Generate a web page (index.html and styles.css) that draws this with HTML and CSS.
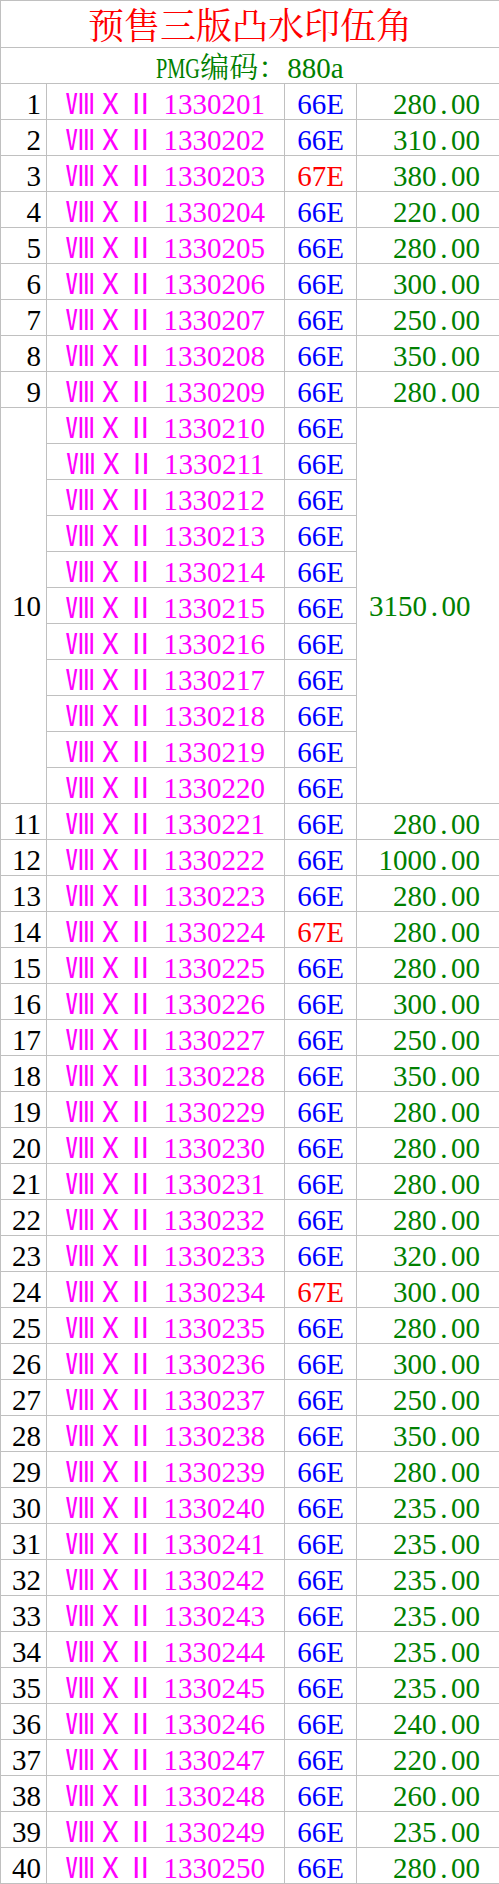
FILE: index.html
```html
<!DOCTYPE html>
<html lang="zh">
<head>
<meta charset="utf-8">
<title>预售三版凸水印伍角</title>
<link rel="stylesheet" href="styles.css">
</head>
<body>
<table class="sheet">
<colgroup><col class="c1"><col class="c2"><col class="c3"><col class="c4"></colgroup>
<tbody>
<tr class="title-row"><td colspan="4" class="title">预售三版凸水印伍角</td></tr>
<tr><td colspan="4" class="pmg"><span class="narrow">PMG</span><span class="cjk">编码：</span>880a</td></tr>
<tr><td class="no">1</td><td class="sn"><span class="rm">ⅧⅩⅡ</span> 1330201</td><td class="gr">66E</td><td class="pr">280<span class="dot">.</span>00</td></tr>
<tr><td class="no">2</td><td class="sn"><span class="rm">ⅧⅩⅡ</span> 1330202</td><td class="gr">66E</td><td class="pr">310<span class="dot">.</span>00</td></tr>
<tr><td class="no">3</td><td class="sn"><span class="rm">ⅧⅩⅡ</span> 1330203</td><td class="gr alt">67E</td><td class="pr">380<span class="dot">.</span>00</td></tr>
<tr><td class="no">4</td><td class="sn"><span class="rm">ⅧⅩⅡ</span> 1330204</td><td class="gr">66E</td><td class="pr">220<span class="dot">.</span>00</td></tr>
<tr><td class="no">5</td><td class="sn"><span class="rm">ⅧⅩⅡ</span> 1330205</td><td class="gr">66E</td><td class="pr">280<span class="dot">.</span>00</td></tr>
<tr><td class="no">6</td><td class="sn"><span class="rm">ⅧⅩⅡ</span> 1330206</td><td class="gr">66E</td><td class="pr">300<span class="dot">.</span>00</td></tr>
<tr><td class="no">7</td><td class="sn"><span class="rm">ⅧⅩⅡ</span> 1330207</td><td class="gr">66E</td><td class="pr">250<span class="dot">.</span>00</td></tr>
<tr><td class="no">8</td><td class="sn"><span class="rm">ⅧⅩⅡ</span> 1330208</td><td class="gr">66E</td><td class="pr">350<span class="dot">.</span>00</td></tr>
<tr><td class="no">9</td><td class="sn"><span class="rm">ⅧⅩⅡ</span> 1330209</td><td class="gr">66E</td><td class="pr">280<span class="dot">.</span>00</td></tr>
<tr><td class="no mid" rowspan="11">10</td><td class="sn"><span class="rm">ⅧⅩⅡ</span> 1330210</td><td class="gr">66E</td><td class="pr lot" rowspan="11">3150<span class="dot">.</span>00</td></tr>
<tr><td class="sn"><span class="rm">ⅧⅩⅡ</span> 1330211</td><td class="gr">66E</td></tr>
<tr><td class="sn"><span class="rm">ⅧⅩⅡ</span> 1330212</td><td class="gr">66E</td></tr>
<tr><td class="sn"><span class="rm">ⅧⅩⅡ</span> 1330213</td><td class="gr">66E</td></tr>
<tr><td class="sn"><span class="rm">ⅧⅩⅡ</span> 1330214</td><td class="gr">66E</td></tr>
<tr><td class="sn"><span class="rm">ⅧⅩⅡ</span> 1330215</td><td class="gr">66E</td></tr>
<tr><td class="sn"><span class="rm">ⅧⅩⅡ</span> 1330216</td><td class="gr">66E</td></tr>
<tr><td class="sn"><span class="rm">ⅧⅩⅡ</span> 1330217</td><td class="gr">66E</td></tr>
<tr><td class="sn"><span class="rm">ⅧⅩⅡ</span> 1330218</td><td class="gr">66E</td></tr>
<tr><td class="sn"><span class="rm">ⅧⅩⅡ</span> 1330219</td><td class="gr">66E</td></tr>
<tr><td class="sn"><span class="rm">ⅧⅩⅡ</span> 1330220</td><td class="gr">66E</td></tr>
<tr><td class="no">11</td><td class="sn"><span class="rm">ⅧⅩⅡ</span> 1330221</td><td class="gr">66E</td><td class="pr">280<span class="dot">.</span>00</td></tr>
<tr><td class="no">12</td><td class="sn"><span class="rm">ⅧⅩⅡ</span> 1330222</td><td class="gr">66E</td><td class="pr">1000<span class="dot">.</span>00</td></tr>
<tr><td class="no">13</td><td class="sn"><span class="rm">ⅧⅩⅡ</span> 1330223</td><td class="gr">66E</td><td class="pr">280<span class="dot">.</span>00</td></tr>
<tr><td class="no">14</td><td class="sn"><span class="rm">ⅧⅩⅡ</span> 1330224</td><td class="gr alt">67E</td><td class="pr">280<span class="dot">.</span>00</td></tr>
<tr><td class="no">15</td><td class="sn"><span class="rm">ⅧⅩⅡ</span> 1330225</td><td class="gr">66E</td><td class="pr">280<span class="dot">.</span>00</td></tr>
<tr><td class="no">16</td><td class="sn"><span class="rm">ⅧⅩⅡ</span> 1330226</td><td class="gr">66E</td><td class="pr">300<span class="dot">.</span>00</td></tr>
<tr><td class="no">17</td><td class="sn"><span class="rm">ⅧⅩⅡ</span> 1330227</td><td class="gr">66E</td><td class="pr">250<span class="dot">.</span>00</td></tr>
<tr><td class="no">18</td><td class="sn"><span class="rm">ⅧⅩⅡ</span> 1330228</td><td class="gr">66E</td><td class="pr">350<span class="dot">.</span>00</td></tr>
<tr><td class="no">19</td><td class="sn"><span class="rm">ⅧⅩⅡ</span> 1330229</td><td class="gr">66E</td><td class="pr">280<span class="dot">.</span>00</td></tr>
<tr><td class="no">20</td><td class="sn"><span class="rm">ⅧⅩⅡ</span> 1330230</td><td class="gr">66E</td><td class="pr">280<span class="dot">.</span>00</td></tr>
<tr><td class="no">21</td><td class="sn"><span class="rm">ⅧⅩⅡ</span> 1330231</td><td class="gr">66E</td><td class="pr">280<span class="dot">.</span>00</td></tr>
<tr><td class="no">22</td><td class="sn"><span class="rm">ⅧⅩⅡ</span> 1330232</td><td class="gr">66E</td><td class="pr">280<span class="dot">.</span>00</td></tr>
<tr><td class="no">23</td><td class="sn"><span class="rm">ⅧⅩⅡ</span> 1330233</td><td class="gr">66E</td><td class="pr">320<span class="dot">.</span>00</td></tr>
<tr><td class="no">24</td><td class="sn"><span class="rm">ⅧⅩⅡ</span> 1330234</td><td class="gr alt">67E</td><td class="pr">300<span class="dot">.</span>00</td></tr>
<tr><td class="no">25</td><td class="sn"><span class="rm">ⅧⅩⅡ</span> 1330235</td><td class="gr">66E</td><td class="pr">280<span class="dot">.</span>00</td></tr>
<tr><td class="no">26</td><td class="sn"><span class="rm">ⅧⅩⅡ</span> 1330236</td><td class="gr">66E</td><td class="pr">300<span class="dot">.</span>00</td></tr>
<tr><td class="no">27</td><td class="sn"><span class="rm">ⅧⅩⅡ</span> 1330237</td><td class="gr">66E</td><td class="pr">250<span class="dot">.</span>00</td></tr>
<tr><td class="no">28</td><td class="sn"><span class="rm">ⅧⅩⅡ</span> 1330238</td><td class="gr">66E</td><td class="pr">350<span class="dot">.</span>00</td></tr>
<tr><td class="no">29</td><td class="sn"><span class="rm">ⅧⅩⅡ</span> 1330239</td><td class="gr">66E</td><td class="pr">280<span class="dot">.</span>00</td></tr>
<tr><td class="no">30</td><td class="sn"><span class="rm">ⅧⅩⅡ</span> 1330240</td><td class="gr">66E</td><td class="pr">235<span class="dot">.</span>00</td></tr>
<tr><td class="no">31</td><td class="sn"><span class="rm">ⅧⅩⅡ</span> 1330241</td><td class="gr">66E</td><td class="pr">235<span class="dot">.</span>00</td></tr>
<tr><td class="no">32</td><td class="sn"><span class="rm">ⅧⅩⅡ</span> 1330242</td><td class="gr">66E</td><td class="pr">235<span class="dot">.</span>00</td></tr>
<tr><td class="no">33</td><td class="sn"><span class="rm">ⅧⅩⅡ</span> 1330243</td><td class="gr">66E</td><td class="pr">235<span class="dot">.</span>00</td></tr>
<tr><td class="no">34</td><td class="sn"><span class="rm">ⅧⅩⅡ</span> 1330244</td><td class="gr">66E</td><td class="pr">235<span class="dot">.</span>00</td></tr>
<tr><td class="no">35</td><td class="sn"><span class="rm">ⅧⅩⅡ</span> 1330245</td><td class="gr">66E</td><td class="pr">235<span class="dot">.</span>00</td></tr>
<tr><td class="no">36</td><td class="sn"><span class="rm">ⅧⅩⅡ</span> 1330246</td><td class="gr">66E</td><td class="pr">240<span class="dot">.</span>00</td></tr>
<tr><td class="no">37</td><td class="sn"><span class="rm">ⅧⅩⅡ</span> 1330247</td><td class="gr">66E</td><td class="pr">220<span class="dot">.</span>00</td></tr>
<tr><td class="no">38</td><td class="sn"><span class="rm">ⅧⅩⅡ</span> 1330248</td><td class="gr">66E</td><td class="pr">260<span class="dot">.</span>00</td></tr>
<tr><td class="no">39</td><td class="sn"><span class="rm">ⅧⅩⅡ</span> 1330249</td><td class="gr">66E</td><td class="pr">235<span class="dot">.</span>00</td></tr>
<tr><td class="no">40</td><td class="sn"><span class="rm">ⅧⅩⅡ</span> 1330250</td><td class="gr">66E</td><td class="pr">280<span class="dot">.</span>00</td></tr>
</tbody>
</table>
</body>
</html>
```
FILE: styles.css
```css
html, body {
  margin: 0;
  padding: 0;
  background: #ffffff;
}

.sheet {
  border-collapse: collapse;
  table-layout: fixed;
  width: 499px;
  font-family: "Liberation Serif", "Noto Sans CJK SC", serif;
  font-size: 29px;
  color: #000000;
}

.c1 { width: 46px; }
.c2 { width: 238px; }
.c3 { width: 72px; }
.c4 { width: 143px; }

.sheet td {
  border: 1px solid #c0c0c0;
  padding: 0;
  height: 35px;
  line-height: 30px;
  white-space: nowrap;
  vertical-align: bottom;
}

.sheet .title {
  height: 46px;
  line-height: 46px;
  vertical-align: middle;
  font-family: "Noto Serif CJK SC", "Noto Sans CJK SC", serif;
  font-size: 36px;
  color: #ff0000;
  text-align: center;
}

.sheet .pmg {
  color: #008000;
  text-align: center;
}

.narrow {
  display: inline-block;
  transform: scaleX(0.7);
  transform-origin: left center;
  margin-right: -0.65em;
}

.cjk {
  font-family: "Noto Serif CJK SC", "Noto Sans CJK SC", serif;
}

.sheet .no {
  text-align: right;
  padding-right: 5px;
}

.sheet .mid {
  vertical-align: middle;
}

.sheet .sn {
  color: #ff00ff;
  text-align: center;
}

.rm {
  font-family: "Noto Sans CJK SC", sans-serif;
  letter-spacing: 1px;
}

.sheet .gr {
  color: #0000ff;
  text-align: center;
}

.sheet .alt {
  color: #ff0000;
}

.sheet .pr {
  color: #008000;
  text-align: right;
  padding-right: 19px;
}

.sheet .lot {
  text-align: left;
  padding-left: 12px;
  padding-right: 0;
  vertical-align: middle;
}

.dot {
  display: inline-block;
  width: 0.5em;
  text-align: center;
}
```
